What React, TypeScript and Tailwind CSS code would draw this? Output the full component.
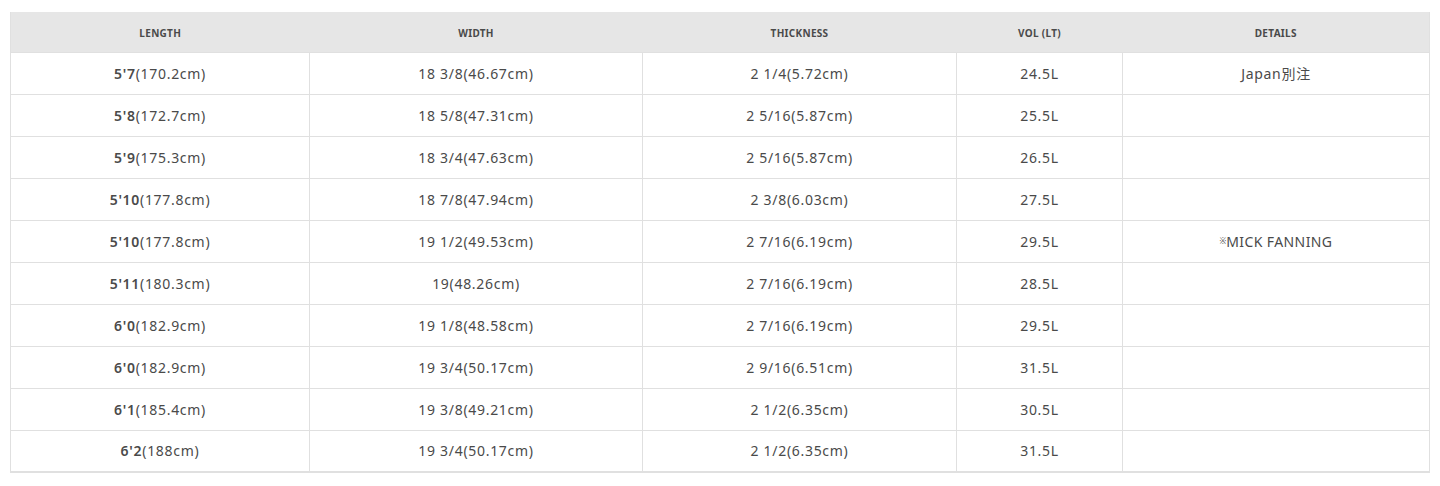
import React from "react";

const rows: [string, string, string, string, string, React.ReactNode][] = [
  ["5'7", "(170.2cm)", "18 3/8(46.67cm)", "2 1/4(5.72cm)", "24.5L", "Japan別注"],
  ["5'8", "(172.7cm)", "18 5/8(47.31cm)", "2 5/16(5.87cm)", "25.5L", ""],
  ["5'9", "(175.3cm)", "18 3/4(47.63cm)", "2 5/16(5.87cm)", "26.5L", ""],
  ["5'10", "(177.8cm)", "18 7/8(47.94cm)", "2 3/8(6.03cm)", "27.5L", ""],
  [
    "5'10",
    "(177.8cm)",
    "19 1/2(49.53cm)",
    "2 7/16(6.19cm)",
    "29.5L",
    <span className="tracking-[0.4px]">
      <span className="text-[8px] align-[3px] tracking-normal">※</span>MICK FANNING
    </span>,
  ],
  ["5'11", "(180.3cm)", "19(48.26cm)", "2 7/16(6.19cm)", "28.5L", ""],
  ["6'0", "(182.9cm)", "19 1/8(48.58cm)", "2 7/16(6.19cm)", "29.5L", ""],
  ["6'0", "(182.9cm)", "19 3/4(50.17cm)", "2 9/16(6.51cm)", "31.5L", ""],
  ["6'1", "(185.4cm)", "19 3/8(49.21cm)", "2 1/2(6.35cm)", "30.5L", ""],
  ["6'2", "(188cm)", "19 3/4(50.17cm)", "2 1/2(6.35cm)", "31.5L", ""],
];

const headers = ["LENGTH", "WIDTH", "THICKNESS", "VOL (LT)", "DETAILS"];
const widths = ["w-[299px]", "w-[333px]", "w-[314px]", "w-[166px]", "w-[307px]"];

export default function App() {
  return (
    <div className="w-[1440px] h-[486px] bg-white pt-[12px] pl-[10px] font-['Noto_Sans','Open_Sans',sans-serif] text-[#4a4a4a]">
      <table className="w-[1419px] table-fixed border-collapse border-r border-b-2 border-l border-[#e0e0e0]">
        <colgroup>
          {widths.map((w, i) => (
            <col key={i} className={w} />
          ))}
        </colgroup>
        <thead>
          <tr className="h-[40px] bg-[#e6e6e6]">
            {headers.map((h) => (
              <th key={h} className="pt-[4px] text-[10px] font-bold text-[#4a4a4a] tracking-[0.3px] text-center align-middle">
                {h}
              </th>
            ))}
          </tr>
        </thead>
        <tbody>
          {rows.map((r, i) => (
            <tr key={i} className="h-[42px] border-t border-[#e0e0e0] text-[14px] tracking-[0.7px]">
              <td className="text-center border-r border-[#e0e0e0]">
                <span className="font-semibold">{r[0]}</span>
                {r[1]}
              </td>
              <td className="text-center border-r border-[#e0e0e0]">{r[2]}</td>
              <td className="text-center border-r border-[#e0e0e0]">{r[3]}</td>
              <td className="text-center border-r border-[#e0e0e0]">{r[4]}</td>
              <td className="text-center font-['Noto_Sans','Noto_Sans_CJK_JP',sans-serif]">{r[5]}</td>
            </tr>
          ))}
        </tbody>
      </table>
    </div>
  );
}
